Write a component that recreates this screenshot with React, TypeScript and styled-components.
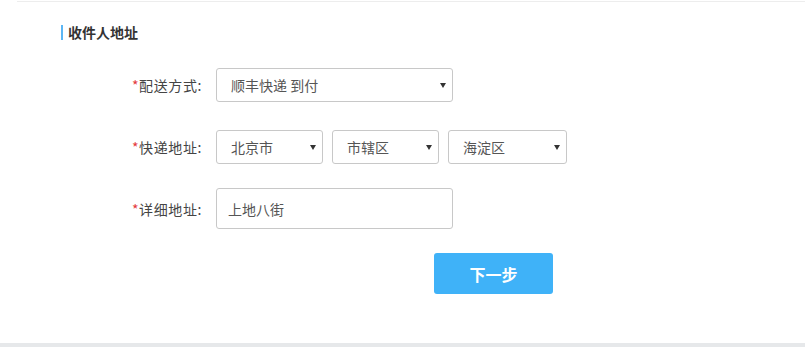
import styled, { createGlobalStyle } from "styled-components";

const GlobalStyle = createGlobalStyle`
  body {
    margin: 0;
    background: #fff;
    font-family: "Microsoft YaHei", "Noto Sans CJK SC", "Noto Sans", sans-serif;
  }
`;

const Page = styled.div`
  width: 805px;
  height: 347px;
  display: flex;
  flex-direction: column;
  overflow: hidden;
`;
const Panel = styled.div`
  flex: 1;
  margin: 1px 0 0 17px;
  border-top: 1px solid #ededed;
`;
const BottomBar = styled.div`
  height: 4px;
  background: #e6e8ea;
`;
const Title = styled.h3`
  margin: 23px 0 0 44px;
  padding-left: 5px;
  border-left: 2px solid #5cb6f4;
  font-size: 14px;
  line-height: 15px;
  font-weight: bold;
  color: #333;
`;
const Form = styled.div`
  margin-top: 28px;
  display: flex;
  flex-direction: column;
`;
const Row = styled.div<{ $gap: number }>`
  display: flex;
  align-items: center;
  margin-bottom: ${(p) => p.$gap}px;
`;
const Label = styled.label`
  width: 185px;
  text-align: right;
  font-size: 14px;
  letter-spacing: 0.6px;
  color: #444;
  margin-right: 14px;
`;
const Star = styled.span`
  color: #e4393c;
`;
const Fields = styled.div`
  display: flex;
  gap: 9px;
`;
const SelectWrap = styled.div<{ $w: number; $h: number }>`
  position: relative;
  width: ${(p) => p.$w}px;
  height: ${(p) => p.$h}px;
  &::after {
    content: "";
    position: absolute;
    right: 7px;
    top: 50%;
    margin-top: -2px;
    border-left: 3.5px solid transparent;
    border-right: 3.5px solid transparent;
    border-top: 5px solid #333;
    pointer-events: none;
  }
`;
const Select = styled.select`
  appearance: none;
  width: 100%;
  height: 100%;
  box-sizing: border-box;
  border: 1px solid #c8c8c8;
  border-radius: 3px;
  background: #fff;
  padding: 0 0 0 14px;
  font-family: inherit;
  font-size: 14px;
  color: #555;
  outline: none;
`;
const Input = styled.input`
  width: 237px;
  height: 41px;
  box-sizing: border-box;
  border: 1px solid #c8c8c8;
  border-radius: 3px;
  padding: 0 0 0 11px;
  font-family: inherit;
  font-size: 14px;
  color: #555;
  outline: none;
`;
const Actions = styled.div`
  padding-left: 417px;
`;
const NextButton = styled.button`
  width: 119px;
  height: 41px;
  border: none;
  border-radius: 3px;
  background: #3fb2f8;
  color: #fff;
  font-family: inherit;
  font-size: 16px;
  font-weight: bold;
  cursor: pointer;
`;

const App = () => {
  return (
    <>
      <GlobalStyle />
      <Page>
        <Panel>
          <Title>收件人地址</Title>
          <Form>
            <Row $gap={28}>
              <Label>
                <Star>*</Star>配送方式:
              </Label>
              <SelectWrap $w={237} $h={34}>
                <Select defaultValue="sf">
                  <option value="sf">顺丰快递 到付</option>
                </Select>
              </SelectWrap>
            </Row>
            <Row $gap={24}>
              <Label>
                <Star>*</Star>快递地址:
              </Label>
              <Fields>
                <SelectWrap $w={107} $h={34}>
                  <Select defaultValue="bj">
                    <option value="bj">北京市</option>
                  </Select>
                </SelectWrap>
                <SelectWrap $w={107} $h={34}>
                  <Select defaultValue="sx">
                    <option value="sx">市辖区</option>
                  </Select>
                </SelectWrap>
                <SelectWrap $w={119} $h={34}>
                  <Select defaultValue="hd">
                    <option value="hd">海淀区</option>
                  </Select>
                </SelectWrap>
              </Fields>
            </Row>
            <Row $gap={24}>
              <Label>
                <Star>*</Star>详细地址:
              </Label>
              <Input defaultValue="上地八街" />
            </Row>
            <Actions>
              <NextButton>下一步</NextButton>
            </Actions>
          </Form>
        </Panel>
        <BottomBar />
      </Page>
    </>
  );
};

export default App;
